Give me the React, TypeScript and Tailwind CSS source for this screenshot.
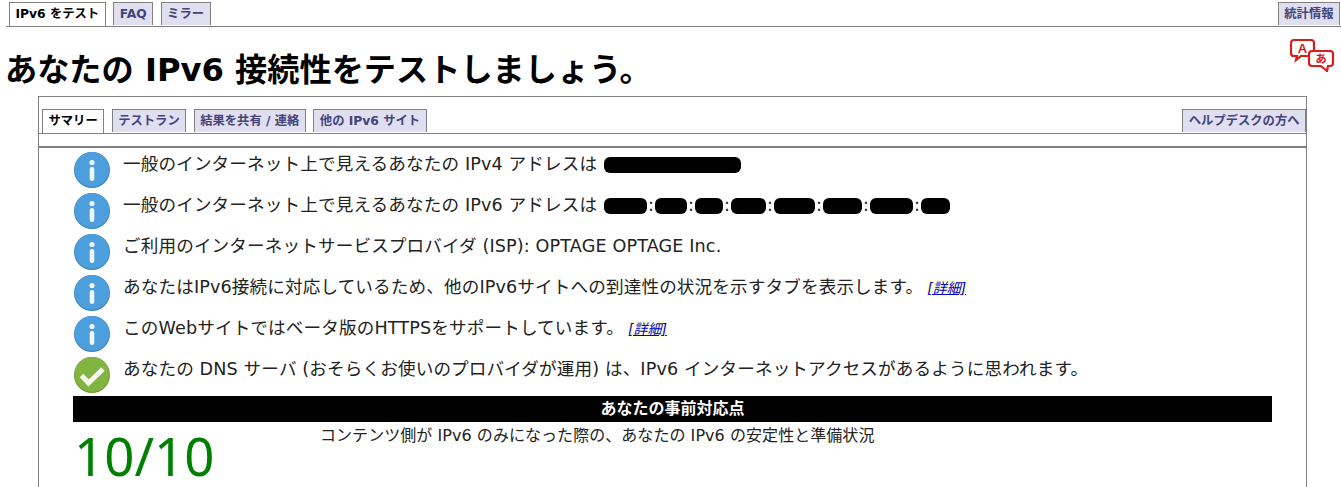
const BODY_FONT = "font-['DejaVu_Sans','Noto_Sans_CJK_JP',sans-serif]";

function Tab({ label, active, className = "" }: { label: string; active?: boolean; className?: string }) {
  return (
    <span
      className={`flex items-center border border-b-0 border-[#808080] px-[5.5px] text-[12.3px] leading-none font-bold whitespace-nowrap ${
        active ? "h-[24px] bg-white text-black" : "mb-px h-[23px] bg-[#dfdff0] text-[#44447a]"
      } ${className}`}
    >
      {label}
    </span>
  );
}

function InfoIcon() {
  return (
    <svg className="shrink-0" width="36" height="36" viewBox="0 0 36 36">
      <circle cx="18" cy="18" r="18" fill="#3b84b8" />
      <circle cx="18" cy="17.4" r="17.4" fill="#4c9fdc" />
      <circle cx="18" cy="10.5" r="2.6" fill="#f2f7fb" />
      <rect x="15.7" y="15" width="4.6" height="14" rx="2.3" fill="#f2f7fb" />
    </svg>
  );
}

function CheckIcon() {
  return (
    <svg className="shrink-0" width="36" height="36" viewBox="0 0 36 36">
      <circle cx="18" cy="18" r="18" fill="#6d9a38" />
      <circle cx="18" cy="17.4" r="17.4" fill="#82b441" />
      <path d="M7.5 18.5 L14.5 26 L29 12" fill="none" stroke="#f6f8f0" strokeWidth="5" strokeLinejoin="miter" />
    </svg>
  );
}

function TranslateIcon() {
  return (
    <svg width="46" height="34" viewBox="0 0 46 34" className="absolute top-[38px] right-[5px]">
      <path
        d="M4 2 H21 Q24 2 24 5 V15 Q24 18 21 18 H11 L6 22 L7 18 H4 Q1 18 1 15 V5 Q1 2 4 2 Z"
        fill="#fff"
        stroke="#d91c1c"
        strokeWidth="2.2"
      />
      <path
        d="M22 13 H40 Q43 13 43 16 V25 Q43 28 40 28 H38 L37 33 L31 28 H22 Q19 28 19 25 V16 Q19 13 22 13 Z"
        fill="#fff"
        stroke="#d91c1c"
        strokeWidth="2.2"
      />
      <text x="12.5" y="14.5" textAnchor="middle" fontSize="13" fontWeight="700" fill="#d91c1c" fontFamily="Liberation Sans, sans-serif">
        A
      </text>
      <text x="31" y="25" textAnchor="middle" fontSize="11.5" fontWeight="700" fill="#d91c1c" fontFamily="Noto Sans CJK JP, sans-serif">
        あ
      </text>
    </svg>
  );
}

function Redacted({ width, className = "" }: { width: number; className?: string }) {
  return <span className={`inline-block h-[16px] rounded-[6px] bg-black align-[-3px] ${className}`} style={{ width }} />;
}

function Colon() {
  return <span className="inline-block w-[8px] text-center">:</span>;
}

function DetailLink() {
  return (
    <a className="ml-[3px] bg-[#ffffdd] px-px text-[14px] tracking-normal text-[#0000cc] italic underline" href="#">
      [詳細]
    </a>
  );
}

function Row({ icon, children }: { icon: React.ReactNode; children: React.ReactNode }) {
  return (
    <div className="flex h-[36px] gap-[13px]">
      {icon}
      <p className="text-[17.6px] leading-[24px] tracking-[0.13px] whitespace-nowrap text-[#222]">{children}</p>
    </div>
  );
}

export default function App() {
  return (
    <div className={`relative h-[487px] w-[1341px] overflow-hidden bg-white ${BODY_FONT}`}>
      <nav className="ml-[6px] flex h-[27px] items-end gap-[7.5px] border-b border-[#808080] pr-[1px] pl-[3px]">
        <Tab label="IPv6 をテスト" active />
        <Tab label="FAQ" />
        <Tab label="ミラー" />
        <Tab label="統計情報" className="ml-auto" />
      </nav>
      <TranslateIcon />
      <h1 className="mt-[21px] ml-[5px] text-[32.2px] leading-[44px] font-bold text-black">
        あなたの IPv6 接続性をテストしましょう。
      </h1>
      <main className="mt-[4px] ml-[38px] h-[391px] w-[1269px] border border-b-0 border-[#808080]">
        <div className="mt-[12px] flex h-[25px] items-end gap-[7.5px] border-b border-[#808080] pl-[3px]">
          <Tab label="サマリー" active />
          <Tab label="テストラン" />
          <Tab label="結果を共有 / 連絡" />
          <Tab label="他の IPv6 サイト" />
          <Tab label="ヘルプデスクの方へ" className="ml-auto" />
        </div>
        <div className="mt-[12px] h-[2px] bg-[#808080]" />
        <div className="mt-[4px] ml-[35px] flex flex-col gap-[5px]">
          <Row icon={<InfoIcon />}>
            一般のインターネット上で見えるあなたの IPv4 アドレスは <Redacted width={137} className="ml-px" />
          </Row>
          <Row icon={<InfoIcon />}>
            一般のインターネット上で見えるあなたの IPv6 アドレスは <Redacted width={43} className="ml-px" />
            <Colon />
            <Redacted width={32} />
            <Colon />
            <Redacted width={28} />
            <Colon />
            <Redacted width={35} />
            <Colon />
            <Redacted width={41} />
            <Colon />
            <Redacted width={39} />
            <Colon />
            <Redacted width={43} />
            <Colon />
            <Redacted width={29} />
          </Row>
          <Row icon={<InfoIcon />}>ご利用のインターネットサービスプロバイダ (ISP): OPTAGE OPTAGE Inc.</Row>
          <Row icon={<InfoIcon />}>
            あなたはIPv6接続に対応しているため、他のIPv6サイトへの到達性の状況を示すタブを表示します。
            <DetailLink />
          </Row>
          <Row icon={<InfoIcon />}>
            このWebサイトではベータ版のHTTPSをサポートしています。
            <DetailLink />
          </Row>
          <Row icon={<CheckIcon />}>
            あなたの DNS サーバ (おそらくお使いのプロバイダが運用) は、IPv6 インターネットアクセスがあるように思われます。
          </Row>
        </div>
        <div className="mt-[3px] ml-[34px] w-[1199px] bg-black text-center text-[16px] leading-[26px] font-bold text-white">
          あなたの事前対応点
        </div>
        <div className="ml-[35px] flex">
          <span className="w-[246px] pt-[6px] font-['Noto_Sans',sans-serif] text-[52.8px] leading-[56px] text-[#008000]">
            10/10
          </span>
          <span className="pt-[3px] text-[16px] leading-[22px] tracking-[0.05px] text-[#222]">
            コンテンツ側が IPv6 のみになった際の、あなたの IPv6 の安定性と準備状況
          </span>
        </div>
      </main>
    </div>
  );
}
